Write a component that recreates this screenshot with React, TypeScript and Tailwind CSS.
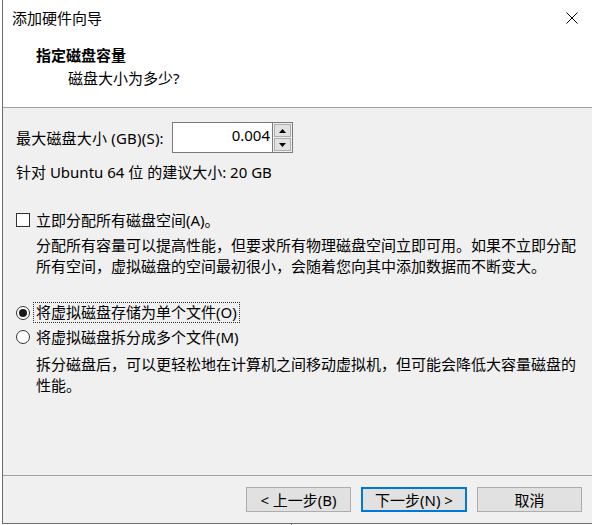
import React, { useState } from 'react';

// Windows-style "add hardware" wizard page: disk capacity step

const Radio = ({ checked, onClick }: { checked: boolean; onClick: () => void }) => (
  <span
    onClick={onClick}
    className="w-[14px] h-[14px] rounded-full border border-[#333] bg-white flex items-center justify-center shrink-0"
  >
    {checked && <span className="w-[8px] h-[8px] rounded-full bg-[#1a1a1a]" />}
  </span>
);

const SpinArrow = ({ up }: { up?: boolean }) => (
  <svg width="7" height="4" viewBox="0 0 7 4">
    <path d={up ? 'M0 4 L3.5 0 L7 4 Z' : 'M0 0 L3.5 4 L7 0 Z'} fill="#000" />
  </svg>
);

export default function App() {
  const [size, setSize] = useState('0.004');
  const [allocate, setAllocate] = useState(false);
  const [mode, setMode] = useState<'single' | 'split'>('single');

  return (
    <div className="w-[593px] h-[525px] bg-white font-['Noto_Sans','Noto_Sans_CJK_SC',sans-serif] text-[15px] text-black overflow-hidden">
      <div className="ml-[2px] w-[590px] h-[524px] border-l border-b border-[#6e6e6e] flex flex-col">
        {/* title bar */}
        <div className="h-[36px] flex items-center justify-between bg-white pl-[9px] pr-[14px]">
          <span className="leading-[20px]">添加硬件向导</span>
          <svg width="12" height="12" viewBox="0 0 12 12">
            <path d="M0.5 0.5 L11.5 11.5 M11.5 0.5 L0.5 11.5" stroke="#000" strokeWidth="1" />
          </svg>
        </div>

        {/* header */}
        <div className="h-[72px] bg-white border-b border-[#a0a0a0] pl-[33px] pt-[9px]">
          <div className="font-bold leading-[20px]">指定磁盘容量</div>
          <div className="pl-[32px] mt-[3px] leading-[20px]">磁盘大小为多少?</div>
        </div>

        {/* body */}
        <div className="flex-1 bg-[#f0f0f0] flex flex-col">
          <div className="pl-[13px] pt-[14px] flex items-center">
            <span className="w-[156px] leading-[20px] tracking-[0.2px]">最大磁盘大小 (GB)(S):</span>
            <div className="flex h-[31px]">
              <input
                value={size}
                onChange={(e) => setSize(e.target.value)}
                className="w-[101px] h-[31px] border border-[#7a7a7a] bg-white text-right pr-[2px] outline-none font-['Noto_Sans','Noto_Sans_CJK_SC',sans-serif] text-[15px] leading-[20px] pb-[6px]"
              />
              <div className="flex flex-col w-[20px] h-[31px] border-t border-r border-b border-[#7a7a7a] bg-[#f0f0f0] p-[1px] gap-[1px]">
                <button className="flex-1 bg-[#e1e1e1] border border-[#adadad] flex items-center justify-center">
                  <SpinArrow up />
                </button>
                <button className="flex-1 bg-[#e1e1e1] border border-[#adadad] flex items-center justify-center">
                  <SpinArrow />
                </button>
              </div>
            </div>
          </div>

          <div className="pl-[13px] mt-[9px] leading-[20px]">针对 Ubuntu 64 位 的建议大小: 20 GB</div>

          <div className="pl-[13px] mt-[28px] flex items-center gap-[6px]">
            <span
              onClick={() => setAllocate(!allocate)}
              className="w-[14px] h-[14px] border border-[#333] bg-white shrink-0"
            />
            <span className="leading-[20px]">立即分配所有磁盘空间(A)。</span>
          </div>
          <div className="pl-[33px] mt-[5px] leading-[21px] pr-[10px]">
            分配所有容量可以提高性能，但要求所有物理磁盘空间立即可用。如果不立即分配所有空间，虚拟磁盘的空间最初很小，会随着您向其中添加数据而不断变大。
          </div>

          <div className="pl-[13px] mt-[25px] flex items-center gap-[3px]">
            <Radio checked={mode === 'single'} onClick={() => setMode('single')} />
            <span className="leading-[19px] border border-dotted border-[#333] px-[2px]">将虚拟磁盘存储为单个文件(O)</span>
          </div>
          <div className="pl-[13px] mt-[4px] flex items-center gap-[3px]">
            <Radio checked={mode === 'split'} onClick={() => setMode('split')} />
            <span className="leading-[20px] px-[3px]">将虚拟磁盘拆分成多个文件(M)</span>
          </div>
          <div className="pl-[33px] mt-[7px] leading-[21px] pr-[10px]">
            拆分磁盘后，可以更轻松地在计算机之间移动虚拟机，但可能会降低大容量磁盘的性能。
          </div>

          <div className="flex-1" />

          {/* footer */}
          <div className="border-t border-[#a0a0a0] h-[48px] flex items-start justify-end gap-[10px] pr-[10px] pt-[11px]">
            <button className="w-[105px] h-[25px] bg-[#e1e1e1] border border-[#adadad] leading-[20px]">&lt; 上一步(B)</button>
            <button className="w-[106px] h-[25px] bg-[#e1e1e1] border-2 border-[#0078d7] leading-[20px]">下一步(N) &gt;</button>
            <button className="w-[105px] h-[25px] bg-[#e1e1e1] border border-[#adadad] leading-[20px]">取消</button>
          </div>
        </div>
      </div>
      <div className="ml-[291px] w-px h-[1px] bg-[#6e6e6e]" />
    </div>
  );
}
